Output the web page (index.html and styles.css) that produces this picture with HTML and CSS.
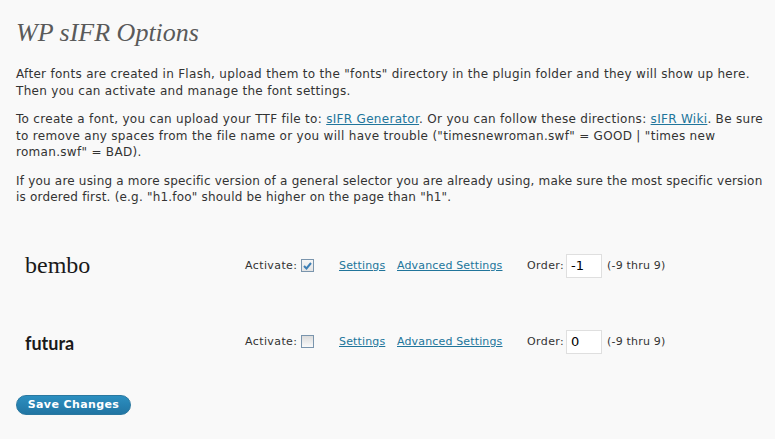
FILE: index.html
```html
<!DOCTYPE html>
<html>
<head>
<meta charset="utf-8">
<link rel="stylesheet" href="styles.css">
</head>
<body>
<div class="wrap">
  <h2 class="title">WP sIFR Options</h2>
  <p>After fonts are created in Flash, upload them to the "fonts" directory in the plugin folder and they will show up here. Then you can activate and manage the font settings.</p>
  <p>To create a font, you can upload your TTF file to: <a href="#">sIFR Generator</a>. Or you can follow these directions: <a href="#">sIFR Wiki</a>. Be sure to remove any spaces from the file name or you will have trouble ("timesnewroman.swf" = GOOD | "times new roman.swf" = BAD).</p>
  <p class="tight">If you are using a more specific version of a general selector you are already using, make sure the most specific version is ordered first. (e.g. "h1.foo" should be higher on the page than "h1".</p>

  <div class="fonts">
    <div class="font-row">
      <div class="font-name bembo">bembo</div>
      <label class="activate"><span class="act-text">Activate:</span><span class="cb checked"><svg width="9" height="8" viewBox="0 0 9 8"><path d="M1 4 L3.5 6.5 L8 1" fill="none" stroke="#3d7fb5" stroke-width="2"/></svg></span></label>
      <a href="#" class="lnk set">Settings</a>
      <a href="#" class="lnk adv">Advanced Settings</a>
      <label class="order"><span class="ord-text">Order:</span><span class="inp">-1</span></label>
      <span class="range">(-9 thru 9)</span>
    </div>
    <div class="font-row">
      <div class="font-name futura">futura</div>
      <label class="activate"><span class="act-text">Activate:</span><span class="cb"></span></label>
      <a href="#" class="lnk set">Settings</a>
      <a href="#" class="lnk adv">Advanced Settings</a>
      <label class="order"><span class="ord-text">Order:</span><span class="inp">0</span></label>
      <span class="range">(-9 thru 9)</span>
    </div>
  </div>

  <button class="save">Save Changes</button>
</div>
</body>
</html>
```

FILE: styles.css
```css
html, body {
  margin: 0;
  padding: 0;
  background: #f9f9f9;
}
body {
  font-family: "DejaVu Sans", Verdana, sans-serif;
  font-size: 12px;
  letter-spacing: 0.3px;
  color: #333;
}
.wrap {
  padding: 0 4px 0 16px;
}
.title {
  margin: 0;
  padding: 20px 0 0 0;
  height: 44px;
  box-sizing: border-box;
  font-family: "Liberation Serif", Georgia, serif;
  font-style: italic;
  font-weight: normal;
  font-size: 26px;
  letter-spacing: 0;
  color: #5a5a5a;
  line-height: 26px;
}
p {
  margin: 0 0 12px 0;
  line-height: 16.5px;
}
p.tight {
  letter-spacing: 0.2px;
}
.wrap > p:first-of-type {
  margin-top: 22px;
}
a {
  color: #21759b;
  text-decoration: underline;
}
.fonts {
  margin-top: 22px;
}
.font-row {
  display: flex;
  align-items: center;
  height: 76px;
  padding-left: 9px;
}
.font-name {
  width: 220px;
  flex: none;
  color: #1a1a1a;
  letter-spacing: 0;
}
.bembo {
  font-family: "Liberation Serif", serif;
  font-size: 24px;
  line-height: 24px;
  margin-top: -2px;
}
.futura {
  font-family: "Lato", sans-serif;
  font-weight: 700;
  font-size: 18px;
  margin-top: 3px;
}
.activate {
  display: flex;
  align-items: center;
  width: 94px;
  flex: none;
}
.act-text {
  width: 56px;
  flex: none;
  font-size: 11px;
  letter-spacing: 0.4px;
}
.cb {
  display: inline-block;
  width: 11px;
  height: 11px;
  border: 1px solid #7a95ad;
  background: linear-gradient(#dcdcdc, #fafafa);
  position: relative;
}
.cb.checked {
  background: linear-gradient(#f6f6f6, #e4e4e4);
}
.cb svg {
  position: absolute;
  left: 1px;
  top: 2px;
}
.lnk {
  flex: none;
  font-size: 11px;
  letter-spacing: 0.15px;
}
.set {
  width: 58px;
}
.adv {
  width: 130px;
}
.order {
  display: flex;
  align-items: center;
  flex: none;
}
.ord-text {
  width: 39px;
  font-size: 11px;
  letter-spacing: 0.4px;
}
.inp {
  display: inline-block;
  width: 30px;
  height: 22px;
  border: 1px solid #dfdfdf;
  background: #fff;
  padding-left: 4px;
  line-height: 22px;
  font-size: 13px;
  color: #000;
  letter-spacing: 0;
}
.range {
  margin-left: 5px;
  font-size: 11px;
  letter-spacing: 0.2px;
}
.save {
  margin-top: 15px;
  display: block;
  font-family: "DejaVu Sans", Verdana, sans-serif;
  font-size: 11px;
  font-weight: bold;
  letter-spacing: 0.4px;
  color: #fff;
  border: 1px solid #2a78a0;
  border-radius: 11px;
  background: linear-gradient(#2c8fc0, #2175a3);
  width: 115px;
  height: 20px;
  padding: 0;
  line-height: 18px;
}
```
